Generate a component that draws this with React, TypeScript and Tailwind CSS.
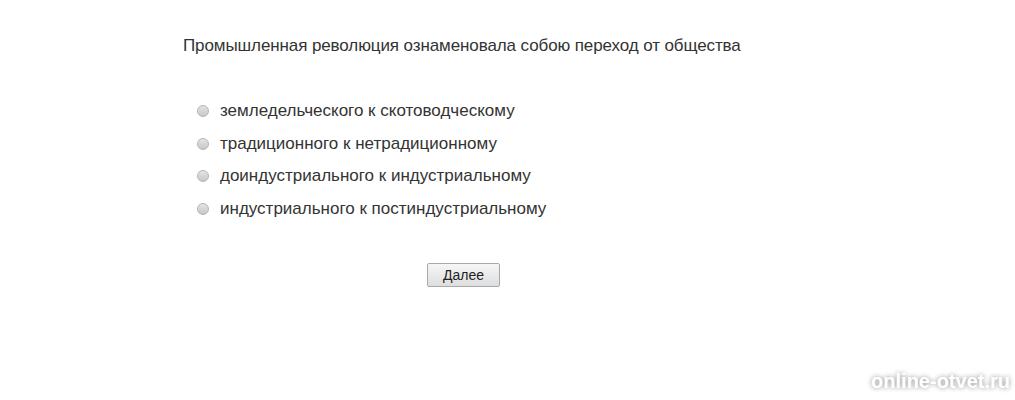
import React from 'react';

const options = [
  'земледельческого к скотоводческому',
  'традиционного к нетрадиционному',
  'доиндустриального к индустриальному',
  'индустриального к постиндустриальному',
];

export default function App() {
  const [picked, setPicked] = React.useState<number | null>(null);

  return (
    <div className="relative h-[400px] w-[1015px] overflow-hidden bg-white font-['Liberation_Sans',Arial,sans-serif] text-[#333]">
      <div className="pl-[183px] pt-[35px]">
        <p className="text-[17px] leading-[22px] tracking-[-0.1px]">
          Промышленная революция ознаменовала собою переход от общества
        </p>

        <div className="mt-[44px] flex flex-col gap-[12.5px] pl-[14px]">
          {options.map((text, i) => (
            <label key={text} className="flex h-[20px] cursor-pointer items-center gap-[11px] text-[17px]">
              <span
                onClick={() => setPicked(i)}
                className="h-[12px] w-[12px] shrink-0 rounded-full border border-[#b5b5b5] bg-gradient-to-b from-[#e4e4e4] to-[#c8c8c8]"
              >
                {picked === i && <span className="m-[3px] block h-[4px] w-[4px] rounded-full bg-[#444]" />}
              </span>
              <span>{text}</span>
            </label>
          ))}
        </div>

        <div className="mt-[44px] pl-[244px]">
          <button className="h-[24px] w-[73px] rounded-[2px] border border-[#a9a9a9] bg-gradient-to-b from-[#f6f6f6] to-[#dedede] text-[14px] text-[#222]">
            Далее
          </button>
        </div>
      </div>

      {/* watermark */}
      <span className="absolute right-[5px] bottom-[4px] text-[20px] font-bold text-white [text-shadow:0_0_5px_rgba(0,0,0,0.45)]">
        online-otvet.ru
      </span>
    </div>
  );
}
